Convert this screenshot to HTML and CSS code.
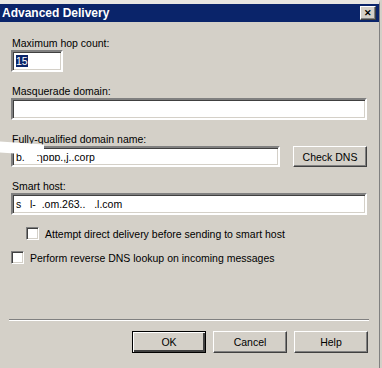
FILE: index.html
```html
<!DOCTYPE html>
<html lang="en">
<head>
    <meta charset="UTF-8">
    <title>Advanced Delivery</title>
    <link rel="stylesheet" href="styles.css">
</head>
<body>
    <div class="window">
        <!-- Title bar -->
        <div class="titlebar">
            <span class="title">Advanced Delivery</span>
            <button class="close-btn">&#x2715;</button>
        </div>

        <div class="content">
            <label class="field-label">Maximum hop count:</label>
            <div class="edit hop"><span class="selected">15</span></div>

            <label class="field-label">Masquerade domain:</label>
            <div class="edit wide"></div>

            <label class="field-label">Fully-qualified domain name:</label>
            <div class="row">
                <div class="edit fqdn">b.&nbsp;&nbsp;&nbsp;&nbsp;:ɿɒɒɒ.,j..corp</div>
                <button class="btn">Check DNS</button>
            </div>

            <label class="field-label">Smart host:</label>
            <div class="edit wide">s&nbsp;&nbsp;&nbsp;l-&nbsp;&nbsp;.om.263..&nbsp;&nbsp;&nbsp;.l.com</div>

            <div class="check indent"><span class="box"></span>Attempt direct delivery before sending to smart host</div>
            <div class="check"><span class="box"></span>Perform reverse DNS lookup on incoming messages</div>
        </div>

        <div class="separator"></div>

        <div class="buttons">
            <button class="btn default">OK</button>
            <button class="btn">Cancel</button>
            <button class="btn">Help</button>
        </div>

        <!-- scribble over the label -->
        <div class="smear"></div>
    </div>
</body>
</html>
```
FILE: styles.css
```css
/* General styling */
body {
    margin: 0;
    background-color: #d4d0c8;
    font-family: 'Liberation Sans', Arial, sans-serif;
    font-size: 10.5px;
    color: #000;
}

.window {
    position: relative;
    width: 380px;
    height: 368px;
    border-top: 4px solid #e8e6e2;
    border-right: 1px solid #808080;
    box-sizing: border-box;
    background-color: #d4d0c8;
}

/* Title bar */
.titlebar {
    height: 18px;
    background-color: #0a246a;
    display: flex;
    align-items: center;
    justify-content: space-between;
    padding: 0 3px 0 2px;
}

.title {
    color: #fff;
    font-family: 'Liberation Sans', Arial, sans-serif;
    font-weight: bold;
    font-size: 12px;
}

.close-btn {
    width: 16px;
    height: 14px;
    padding: 0;
    background-color: #d4d0c8;
    border: 1px solid;
    border-color: #fff #404040 #404040 #fff;
    box-shadow: inset -1px -1px 0 #808080;
    font-size: 9px;
    font-weight: bold;
    line-height: 11px;
    color: #000;
}

/* Form area */
.content {
    display: flex;
    flex-direction: column;
    padding: 14px 0 0 11px;
}

.field-label {
    display: block;
    margin-left: 1px;
    height: 14px;
    line-height: 14px;
}

.edit {
    box-sizing: border-box;
    height: 22px;
    background-color: #fff;
    border: 2px solid;
    border-color: #808080 #fff #fff #808080;
    box-shadow: inset 1px 1px 0 #404040, inset -1px -1px 0 #d4d0c8;
    padding: 2px 2px 0 3px;
    line-height: 15px;
    margin-bottom: 12px;
}

.hop {
    width: 52px;
}

.selected {
    background-color: #0a246a;
    color: #fff;
}

.wide {
    width: 356px;
}

.row {
    display: flex;
    gap: 13px;
}

.fqdn {
    width: 269px;
    height: 21px;
}

/* Buttons */
.btn {
    box-sizing: border-box;
    width: 74px;
    height: 22px;
    padding: 0;
    background-color: #d4d0c8;
    border: 1px solid;
    border-color: #fff #404040 #404040 #fff;
    box-shadow: inset -1px -1px 0 #808080;
    font-family: 'Liberation Sans', Arial, sans-serif;
    font-size: 10.5px;
    color: #000;
}

.row .btn {
    height: 21px;
}

.btn.default {
    border: 1px solid #000;
    box-shadow: inset 1px 1px 0 #fff, inset -2px -2px 0 #404040;
}

/* Checkboxes */
.check {
    display: flex;
    align-items: center;
    height: 13px;
    margin-bottom: 11px;
}

.check.indent {
    margin-left: 15px;
}

.box {
    box-sizing: border-box;
    width: 13px;
    height: 13px;
    margin-right: 6px;
    background-color: #fff;
    border: 1px solid;
    border-color: #808080 #fff #fff #808080;
    box-shadow: inset 1px 1px 0 #404040, inset -1px -1px 0 #d4d0c8;
}

.separator {
    margin: 44px 10px 0 9px;
    height: 1px;
    background-color: #808080;
    border-bottom: 1px solid #fff;
}

.buttons {
    display: flex;
    justify-content: flex-end;
    gap: 7px;
    padding: 10px 11px 0 0;
}

.smear {
    position: absolute;
    left: 0;
    top: 139px;
    width: 44px;
    height: 11px;
    background-color: #fff;
    transform: skewY(4deg);
}
```
